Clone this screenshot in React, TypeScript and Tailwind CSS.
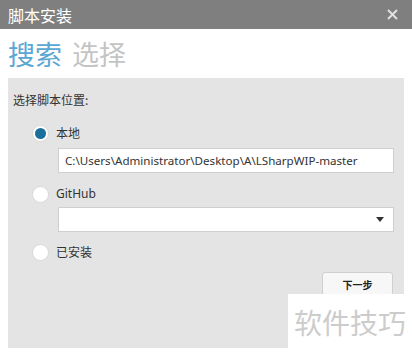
import { useState } from "react";

const cjk = { fontFamily: '"Noto Sans CJK SC", "Noto Sans", sans-serif' };
const latin = { fontFamily: '"Noto Sans", "Noto Sans CJK SC", sans-serif' };

function Radio({ checked, label, onClick }: { checked: boolean; label: string; onClick: () => void }) {
  return (
    <div className="flex h-[20px] items-center cursor-pointer" onClick={onClick}>
      <span className="ml-[24px] flex h-[17px] w-[17px] items-center justify-center rounded-full bg-white border border-[#d8d8d8]">
        {checked && <span className="h-[11px] w-[11px] rounded-full bg-[#1c6e9c]" />}
      </span>
      <span className="ml-[7px] text-[12px] text-[#333]">{label}</span>
    </div>
  );
}

export default function App() {
  const [source, setSource] = useState("local");

  return (
    <div className="relative h-[357px] w-[412px] overflow-hidden bg-white" style={cjk}>
      <div className="flex h-[29px] items-center justify-between bg-[#7f7f7f] pl-[8px] pr-[14px]">
        <span className="text-[16px] text-white">脚本安装</span>
        <svg width="11" height="11" viewBox="0 0 11 11">
          <path d="M1 1 L10 10 M10 1 L1 10" stroke="#e0e0e0" strokeWidth="2" />
        </svg>
      </div>

      <div className="flex h-[49px] items-center gap-[10px] pl-[8px] text-[27px] leading-none">
        <span className="text-[#5ba6d2]">搜索</span>
        <span className="text-[#c4c4c4]">选择</span>
      </div>

      <div className="mx-[8px] h-[270px] bg-[#e4e4e4] pt-[13px]">
        <div className="pl-[5px] text-[12px] text-[#333]">选择脚本位置:</div>

        <div className="mt-[14px]">
          <Radio checked={source === "local"} label="本地" onClick={() => setSource("local")} />
        </div>
        <div
          className="ml-[50px] mr-[10px] mt-[5px] flex h-[25px] items-center border border-[#cfcfcf] bg-white px-[6px] text-[11.6px] text-[#333]"
          style={latin}
        >
          C:\Users\Administrator\Desktop\A\LSharpWIP-master
        </div>

        <div className="mt-[11px]" style={latin}>
          <Radio checked={source === "github"} label="GitHub" onClick={() => setSource("github")} />
        </div>
        <div className="ml-[50px] mr-[10px] mt-[3px] flex h-[25px] items-center justify-end border border-[#cfcfcf] bg-white pr-[9px]">
          <svg width="8" height="5" viewBox="0 0 8 5">
            <path d="M0 0 L8 0 L4 5 Z" fill="#333" />
          </svg>
        </div>

        <div className="mt-[10px]">
          <Radio checked={source === "installed"} label="已安装" onClick={() => setSource("installed")} />
        </div>

        <div className="mr-[11px] mt-[10px] flex justify-end">
          <button className="h-[24px] w-[71px] rounded-[3px] border border-[#cfcfcf] bg-[#f7f7f7] text-[10px] font-bold text-[#222]">
            下一步
          </button>
        </div>
      </div>

      <div className="absolute left-[288px] top-[294px] flex h-[55px] w-[124px] items-center justify-center bg-white">
        <span className="text-[28px] text-[#cccccc]">软件技巧</span>
      </div>
    </div>
  );
}
